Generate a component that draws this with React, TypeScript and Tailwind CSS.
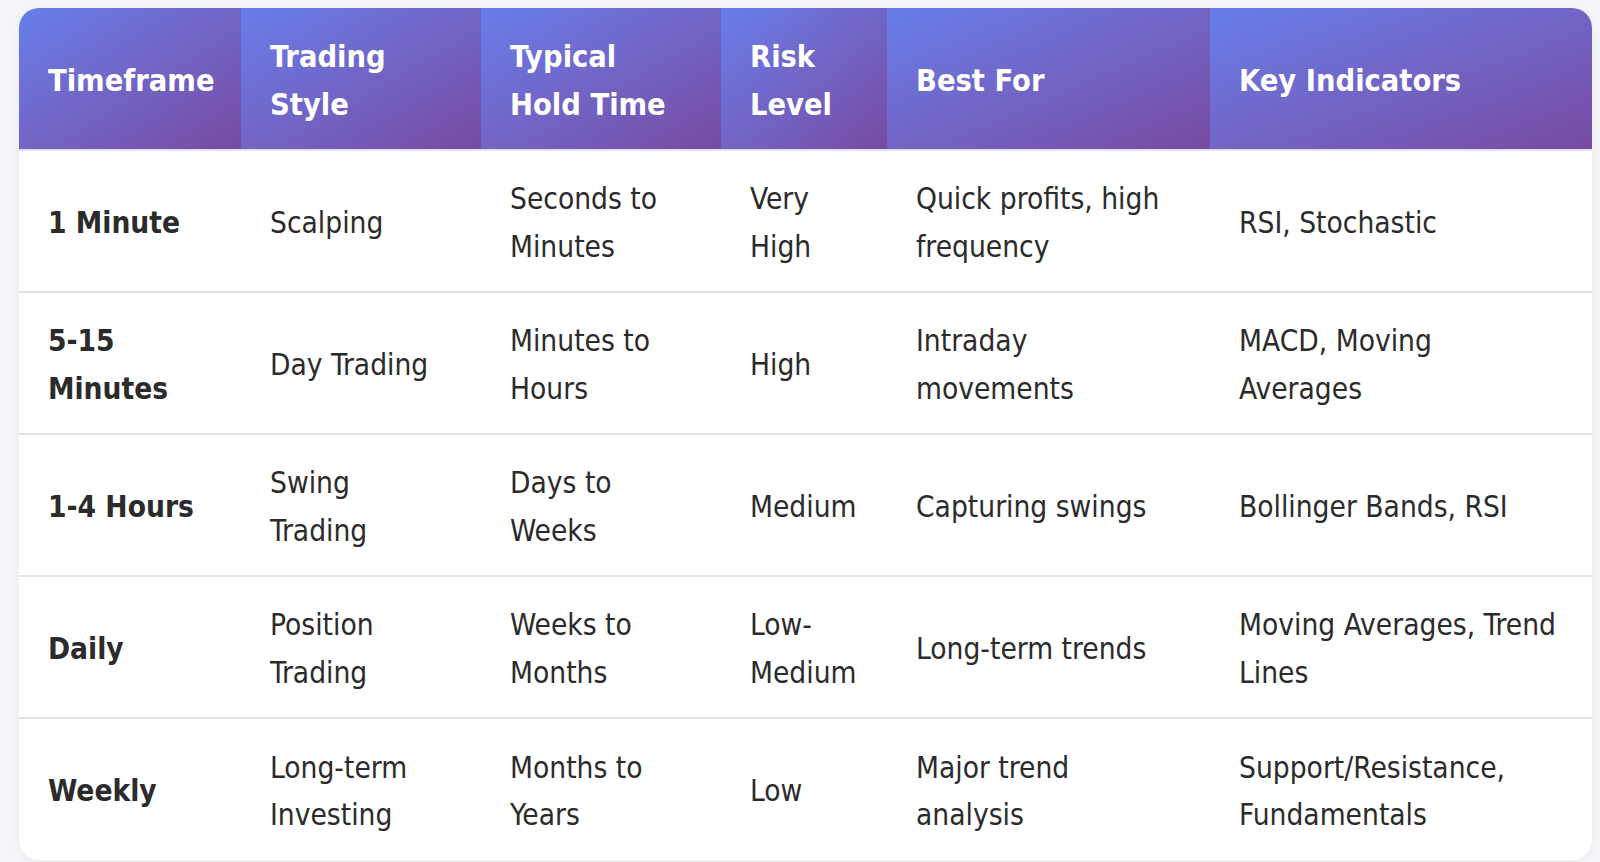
const headers: string[][] = [
  ['Timeframe'],
  ['Trading', 'Style'],
  ['Typical', 'Hold Time'],
  ['Risk', 'Level'],
  ['Best For'],
  ['Key Indicators'],
]

const widths = ['w-[222px]', 'w-[240px]', 'w-[240px]', 'w-[166px]', 'w-[323px]', 'w-[382px]']

const rows: string[][][] = [
  [['1 Minute'], ['Scalping'], ['Seconds to', 'Minutes'], ['Very', 'High'], ['Quick profits, high', 'frequency'], ['RSI, Stochastic']],
  [['5-15', 'Minutes'], ['Day Trading'], ['Minutes to', 'Hours'], ['High'], ['Intraday', 'movements'], ['MACD, Moving', 'Averages']],
  [['1-4 Hours'], ['Swing', 'Trading'], ['Days to', 'Weeks'], ['Medium'], ['Capturing swings'], ['Bollinger Bands, RSI']],
  [['Daily'], ['Position', 'Trading'], ['Weeks to', 'Months'], ['Low-', 'Medium'], ['Long-term trends'], ['Moving Averages, Trend', 'Lines']],
  [['Weekly'], ['Long-term', 'Investing'], ['Months to', 'Years'], ['Low'], ['Major trend', 'analysis'], ['Support/Resistance,', 'Fundamentals']],
]

function Lines({ lines }: { lines: string[] }) {
  return (
    <>
      {lines.map((l, i) => (
        <span key={i} className="block whitespace-nowrap">
          {l}
        </span>
      ))}
    </>
  )
}

export default function App() {
  return (
    <div
      className="min-h-screen bg-[#f4f6f9] pl-[19px] pt-[8px]"
      style={{ fontFamily: '"DejaVu Sans Condensed", "DejaVu Sans", Verdana, sans-serif' }}
    >
      <div className="w-[1573px] overflow-hidden rounded-[20px] bg-white shadow-[0_2px_8px_rgba(0,0,0,0.06)]">
        <table className="w-full table-fixed border-collapse text-[29.6px] leading-[47.4px]">
          <thead>
            <tr>
              {headers.map((h, i) => (
                <th
                  key={i}
                  className={`${widths[i]} h-[142px] border-b-2 border-[#e2e2e8] bg-gradient-to-br from-[#667eea] to-[#764ba2] px-[29px] pt-[4px] text-left align-middle text-[30.5px] font-bold text-white`}
                >
                  <Lines lines={h} />
                </th>
              ))}
            </tr>
          </thead>
          <tbody>
            {rows.map((r, ri) => (
              <tr key={ri}>
                {r.map((c, ci) => (
                  <td
                    key={ci}
                    className={`h-[142px] px-[29px] pt-[5px] align-middle text-[#2b2b2b] ${
                      ri < rows.length - 1 ? 'border-b-2 border-[#e2e2e2]' : ''
                    } ${ci === 0 ? 'font-bold' : ''}`}
                  >
                    <Lines lines={c} />
                  </td>
                ))}
              </tr>
            ))}
          </tbody>
        </table>
      </div>
    </div>
  )
}
